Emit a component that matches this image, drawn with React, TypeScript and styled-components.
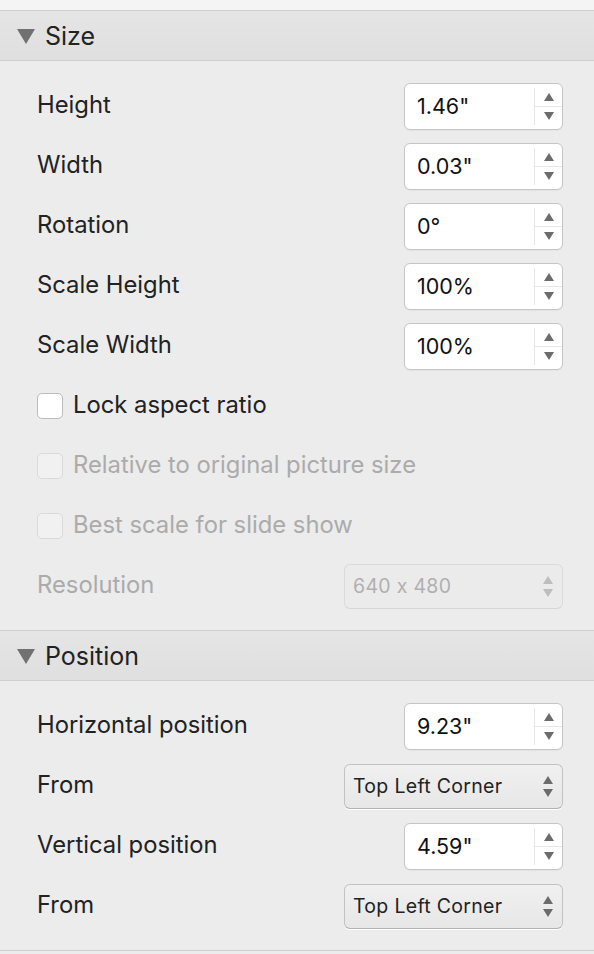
import React from 'react';
import styled, { createGlobalStyle } from 'styled-components';

const GlobalStyle = createGlobalStyle`
    html, body {
        margin: 0;
        padding: 0;
        background: #ececec;
        font-family: "Inter", "Liberation Sans", sans-serif;
        -webkit-font-smoothing: antialiased;
    }
`;

const Panel = styled.div`
    width: 594px;
    height: 954px;
    background: #ececec;
    overflow: hidden;
`;

const TopStrip = styled.div`
    height: 10px;
    background: #f4f4f4;
    border-bottom: 1px solid #cfcfcf;
`;

const SectionHeader = styled.div`
    height: 49px;
    display: flex;
    align-items: center;
    gap: 10px;
    padding-left: 17px;
    background: linear-gradient(#e5e5e5, #dfdfdf);
    border-bottom: 1px solid #cfcfcf;
    color: #222;
    font-size: 25px;
`;

const Disclosure = styled.span`
    width: 0;
    height: 0;
    border-left: 9px solid transparent;
    border-right: 9px solid transparent;
    border-top: 15px solid #717171;
    margin-top: 2px;
`;

const SectionBody = styled.div<{ $bottom: number }>`
    padding: 15px 31px ${p => p.$bottom}px 37px;
    border-bottom: 1px solid #cfcfcf;
`;

const Row = styled.div`
    height: 60px;
    display: flex;
    align-items: center;
    justify-content: space-between;
`;

const Label = styled.span<{ $disabled?: boolean }>`
    font-size: 23.8px;
    font-weight: 400;
    color: ${p => (p.$disabled ? '#ababab' : '#222')};
    margin-top: -4px;
`;

const CheckRow = styled.label<{ $disabled?: boolean }>`
    height: 60px;
    display: flex;
    align-items: center;
    gap: 10px;
    font-size: 23.8px;
    color: ${p => (p.$disabled ? '#ababab' : '#222')};
`;

const CheckText = styled.span`
    margin-top: -3px;
`;

const Box = styled.span<{ $disabled?: boolean }>`
    width: 26px;
    height: 26px;
    box-sizing: border-box;
    border-radius: 5px;
    background: ${p => (p.$disabled ? '#f1f1f1' : '#fff')};
    border: 1px solid ${p => (p.$disabled ? '#dadada' : '#bcbcbc')};
    margin-top: -1px;
`;

const Spinner = styled.div`
    width: 159px;
    height: 47px;
    box-sizing: border-box;
    display: flex;
    background: #fff;
    border: 1px solid #c6c6c6;
    border-radius: 6px;
    box-shadow: 0 1px 1px rgba(0, 0, 0, 0.04);
`;

const SpinValue = styled.div`
    flex: 1;
    display: flex;
    align-items: center;
    padding-left: 12px;
    font-size: 21.5px;
    color: #111;
`;

const Stepper = styled.div`
    width: 27px;
    display: flex;
    flex-direction: column;
    border-left: 1px solid #e6e6e6;
    margin: 4px 0;
`;

const StepHalf = styled.div<{ $first?: boolean }>`
    flex: 1;
    display: flex;
    align-items: center;
    justify-content: center;
    border-bottom: ${p => (p.$first ? '1px solid #e6e6e6' : 'none')};
`;

const Arrow = styled.span<{ $up?: boolean; $color?: string }>`
    width: 0;
    height: 0;
    border-left: 5px solid transparent;
    border-right: 5px solid transparent;
    ${p => (p.$up ? 'border-bottom' : 'border-top')}: 8px solid ${p => p.$color || '#6c6c6c'};
`;

const Select = styled.div<{ $disabled?: boolean }>`
    width: 219px;
    height: 45px;
    box-sizing: border-box;
    display: flex;
    align-items: center;
    justify-content: space-between;
    padding: 0 9px 0 8px;
    border-radius: 6px;
    font-size: 19.5px;
    color: ${p => (p.$disabled ? '#b0b0b0' : '#222')};
    background: ${p => (p.$disabled ? '#ebebeb' : 'linear-gradient(#f0f0f0, #e7e7e7)')};
    border: 1px solid ${p => (p.$disabled ? '#dadada' : '#c2c2c2')};
    border-bottom-color: ${p => (p.$disabled ? '#d6d6d6' : '#b2b2b2')};
    box-shadow: ${p => (p.$disabled ? 'none' : '0 1px 0 #fff')};
    letter-spacing: 0.3px;
`;

const ArrowPair = styled.div`
    display: flex;
    flex-direction: column;
    gap: 5px;
`;

const NumberField = ({ value }: { value: string }) => (
    <Spinner>
        <SpinValue>{value}</SpinValue>
        <Stepper>
            <StepHalf $first><Arrow $up /></StepHalf>
            <StepHalf><Arrow /></StepHalf>
        </Stepper>
    </Spinner>
);

const PopUp = ({ value, disabled }: { value: string; disabled?: boolean }) => (
    <Select $disabled={disabled}>
        <span>{value}</span>
        <ArrowPair>
            <Arrow $up $color={disabled ? '#bdbdbd' : '#6c6c6c'} />
            <Arrow $color={disabled ? '#bdbdbd' : '#6c6c6c'} />
        </ArrowPair>
    </Select>
);

const sizeFields = [
    { label: 'Height', value: '1.46"' },
    { label: 'Width', value: '0.03"' },
    { label: 'Rotation', value: '0°' },
    { label: 'Scale Height', value: '100%' },
    { label: 'Scale Width', value: '100%' },
];

const checks = [
    { label: 'Lock aspect ratio', disabled: false },
    { label: 'Relative to original picture size', disabled: true },
    { label: 'Best scale for slide show', disabled: true },
];

export default function App() {
    return (
        <Panel>
            <GlobalStyle />
            <TopStrip />
            <SectionHeader>
                <Disclosure />
                Size
            </SectionHeader>
            <SectionBody $bottom={14}>
                {sizeFields.map(f => (
                    <Row key={f.label}>
                        <Label>{f.label}</Label>
                        <NumberField value={f.value} />
                    </Row>
                ))}
                {checks.map(c => (
                    <CheckRow key={c.label} $disabled={c.disabled}>
                        <Box $disabled={c.disabled} />
                        <CheckText>{c.label}</CheckText>
                    </CheckRow>
                ))}
                <Row>
                    <Label $disabled>Resolution</Label>
                    <PopUp value="640 x 480" disabled />
                </Row>
            </SectionBody>
            <SectionHeader>
                <Disclosure />
                Position
            </SectionHeader>
            <SectionBody $bottom={14}>
                <Row>
                    <Label>Horizontal position</Label>
                    <NumberField value={'9.23"'} />
                </Row>
                <Row>
                    <Label>From</Label>
                    <PopUp value="Top Left Corner" />
                </Row>
                <Row>
                    <Label>Vertical position</Label>
                    <NumberField value={'4.59"'} />
                </Row>
                <Row>
                    <Label>From</Label>
                    <PopUp value="Top Left Corner" />
                </Row>
            </SectionBody>
        </Panel>
    );
}
